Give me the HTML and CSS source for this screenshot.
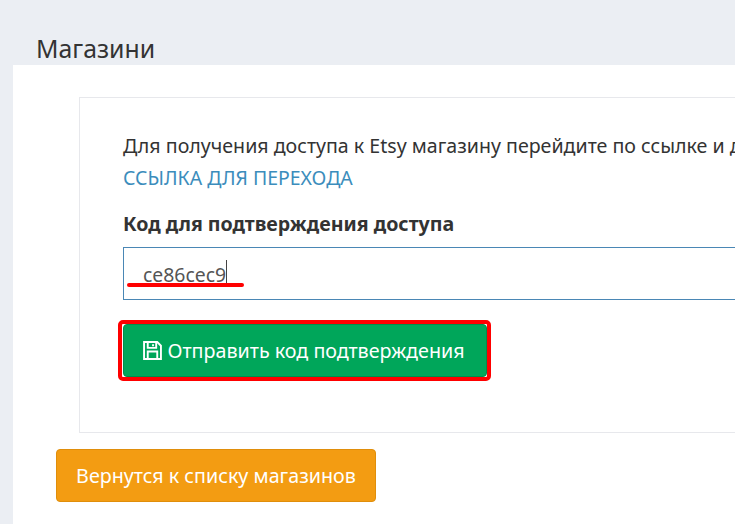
FILE: index.html
```html
<!DOCTYPE html>
<html lang="ru">
<head>
<meta charset="utf-8">
<title>Магазини</title>
<link rel="stylesheet" href="styles.css">
</head>
<body>
<div class="page">
  <h1 class="title">Магазини</h1>
  <main class="panel">
    <section class="card">
      <p class="intro">Для получения доступа к Etsy магазину перейдите по ссылке и дайте доступ к вашему магазину</p>
      <a class="link" href="#">ССЫЛКА ДЛЯ ПЕРЕХОДА</a>
      <label class="label">Код для подтверждения доступа</label>
      <div class="input">
        <span class="value">ce86cec9</span><span class="caret"></span>
        <span class="underline"></span>
      </div>
      <div class="highlight">
        <button class="btn btn-green">
          <svg class="icon" viewBox="0 0 18 18" width="19" height="19" fill="none" stroke="currentColor" stroke-width="1.800"><path d="M1 1h12.500l3.500 3.500v12.500h-16z"/><path d="M4.500 1.500v5h8v-5M9.500 3v2"/><path d="M4.500 16.500v-6.500h9v6.500"/></svg>Отправить код подтверждения
        </button>
      </div>
    </section>
    <button class="btn btn-orange">Вернутся к списку магазинов</button>
  </main>
</div>
</body>
</html>
```
FILE: styles.css
```css
html, body {
  margin: 0;
  padding: 0;
  height: 100%;
  overflow: hidden;
  background: #ebeef3;
}
body {
  font-family: "Noto Sans", "Open Sans", sans-serif;
  font-size: 19.6px;
  color: #333;
}
.page {
  width: 1200px;
  padding-top: 32px;
  padding-left: 13px;
}
.title {
  margin: 0 0 0 23px;
  font-size: 24.8px;
  font-weight: 400;
  line-height: 32px;
  height: 33px;
}
.panel {
  background: #fff;
  padding: 32px 0 60px 43px;
  height: 500px;
  box-sizing: border-box;
}
.card {
  margin-left: 23px;
  padding: 32px 43px 55px;
  border: 1px solid #e7e8ec;
  border-right: 0;
}
.intro {
  margin: 0;
  line-height: 32px;
  white-space: nowrap;
}
.link {
  display: block;
  color: #3c8dbc;
  font-size: 19.45px;
  text-decoration: none;
  line-height: 32px;
}
.label {
  display: block;
  margin-top: 14px;
  font-weight: 700;
  line-height: 32px;
}
.input {
  position: relative;
  margin-top: 7px;
  height: 50px;
  padding: 1px 0 0 19px;
  border: 1px solid #4a87b5;
  display: flex;
  align-items: center;
  color: #555;
  font-size: 19.4px;
}
.caret {
  width: 1px;
  height: 26px;
  background: #444;
  margin-bottom: 3px;
}
.underline {
  position: absolute;
  left: 3px;
  top: 35px;
  width: 117px;
  height: 4px;
  border-radius: 2px;
  background: #f00;
}
.highlight {
  width: 365px;
  margin-left: -1px;
  margin-top: 24px;
  padding-left: 1px;
  box-sizing: border-box;
  outline: 4px solid #f00;
  border-radius: 1px;
}
.btn {
  display: flex;
  align-items: center;
  justify-content: center;
  font: inherit;
  font-size: 19.7px;
  color: #fff;
  border-radius: 4px;
  cursor: pointer;
}
.btn-green {
  width: 364px;
  height: 53px;
  padding: 0 2px 0 0;
  background: #00a65a;
  border: 1px solid #008d4c;
}
.icon {
  margin-right: 5px;
}
.btn-orange {
  width: 320px;
  height: 53px;
  margin-top: 16px;
  background: #f39c12;
  border: 1px solid #e08e0b;
}
```
